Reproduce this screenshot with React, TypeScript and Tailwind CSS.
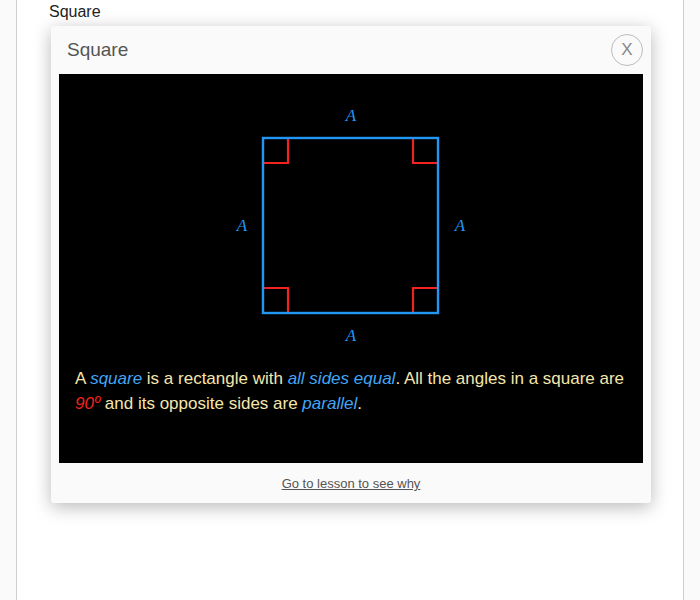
import React, { FC } from "react";

const BLUE = "#2196f3";
const RED = "#f2231f";

const Corner: FC<{ d: string }> = ({ d }) => (
    <path d={d} fill="none" stroke={RED} strokeWidth={2.2} />
);

const SquareFigure: FC = () => {
    // square from (204,64) to (379,239), corner marks 25px
    const x0 = 204, y0 = 64, x1 = 379, y1 = 239, c = 25;
    return (
        <svg width={584} height={292} className="block">
            <Corner d={`M${x0} ${y0 + c} H${x0 + c} V${y0}`} />
            <Corner d={`M${x1 - c} ${y0} V${y0 + c} H${x1}`} />
            <Corner d={`M${x0} ${y1 - c} H${x0 + c} V${y1}`} />
            <Corner d={`M${x1 - c} ${y1} V${y1 - c} H${x1}`} />
            <rect x={x0} y={y0} width={x1 - x0} height={y1 - y0} fill="none" stroke={BLUE} strokeWidth={2.4} />
            <g fill={BLUE} fontFamily="'Liberation Serif', serif" fontStyle="italic" fontSize={17} textAnchor="middle">
                <text x={292} y={47}>A</text>
                <text x={292} y={267}>A</text>
                <text x={183} y={157}>A</text>
                <text x={401} y={157}>A</text>
            </g>
        </svg>
    );
}

const App: FC = () => {
    return (
        <div className="min-h-[600px] bg-[#fafafa] font-['Liberation_Sans',Arial,sans-serif]">
            <div className="ml-[16px] w-[668px] min-h-[600px] bg-white border-x border-[#cfcfcf] pt-[2px]">
                <p className="pl-[32px] text-[16px] leading-[20px] text-[#222]">Square</p>
                <div className="ml-[34px] mt-[4px] w-[600px] bg-[#fafafa] rounded-[3px] shadow-[0_4px_18px_rgba(0,0,0,0.28)]">
                    <div className="h-[48px] flex items-center justify-between pl-[16px] pr-[8px]">
                        <h2 className="text-[19px] text-[#555]">Square</h2>
                        <button className="w-[32px] h-[32px] rounded-full border border-[#bdbdbd] text-[#888] text-[17px] font-light flex items-center justify-center">
                            X
                        </button>
                    </div>
                    <div className="mx-[8px] h-[389px] bg-black">
                        <SquareFigure />
                        <p className="px-[16px] text-[17px] leading-[25px] text-[#f5e6ab]">
                            A <i className="text-[#42a5f5]">square</i> is a rectangle with <i className="text-[#42a5f5]">all sides equal</i>. All the angles in a square are{" "}
                            <i className="text-[#f2231f]">90º</i> and its opposite sides are <i className="text-[#42a5f5]">parallel</i>.
                        </p>
                    </div>
                    <div className="h-[40px] pt-[2px] flex items-center justify-center">
                        <a href="#" className="text-[13px] text-[#555] underline">Go to lesson to see why</a>
                    </div>
                </div>
            </div>
        </div>
    );
}

export default App;
